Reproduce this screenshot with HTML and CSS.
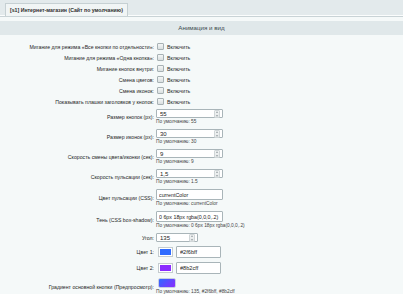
FILE: index.html
```html
<!DOCTYPE html>
<html lang="ru">
<head>
  <meta charset="UTF-8">
  <title>Настройки модуля</title>
  <link rel="stylesheet" href="styles.css">
</head>
<body>
  <div class="tabs">
    <div class="tab">[s1] Интернет-магазин (Сайт по умолчанию)</div>
  </div>
  <div class="content">
    <div class="heading">Анимация и вид</div>
    <div class="form">
      <div class="row check">
        <div class="label">Мигание для режима «Все кнопки по отдельности»:</div>
        <label class="ctrl"><input type="checkbox"> Включить</label>
      </div>
      <div class="row check">
        <div class="label">Мигание для режима «Одна кнопка»:</div>
        <label class="ctrl"><input type="checkbox"> Включить</label>
      </div>
      <div class="row check">
        <div class="label">Мигание кнопок внутри:</div>
        <label class="ctrl"><input type="checkbox"> Включить</label>
      </div>
      <div class="row check">
        <div class="label">Смена цветов:</div>
        <label class="ctrl"><input type="checkbox"> Включить</label>
      </div>
      <div class="row check">
        <div class="label">Смена иконок:</div>
        <label class="ctrl"><input type="checkbox"> Включить</label>
      </div>
      <div class="row check">
        <div class="label">Показывать плашки заголовков у кнопок:</div>
        <label class="ctrl"><input type="checkbox"> Включить</label>
      </div>

      <div class="row">
        <div class="label">Размер кнопок (px):</div>
        <div class="ctrl">
          <div class="num"><input type="text" value="55"><span class="spin"></span></div>
          <div class="hint">По умолчанию: 55</div>
        </div>
      </div>
      <div class="row">
        <div class="label">Размер иконок (px):</div>
        <div class="ctrl">
          <div class="num"><input type="text" value="30"><span class="spin"></span></div>
          <div class="hint">По умолчанию: 30</div>
        </div>
      </div>
      <div class="row">
        <div class="label">Скорость смены цвета/иконки (сек):</div>
        <div class="ctrl">
          <div class="num"><input type="text" value="9"><span class="spin"></span></div>
          <div class="hint">По умолчанию: 9</div>
        </div>
      </div>
      <div class="row">
        <div class="label">Скорость пульсации (сек):</div>
        <div class="ctrl">
          <div class="num"><input type="text" value="1,5"><span class="spin"></span></div>
          <div class="hint">По умолчанию: 1.5</div>
        </div>
      </div>
      <div class="row">
        <div class="label">Цвет пульсации (CSS):</div>
        <div class="ctrl">
          <input class="text" type="text" value="currentColor">
          <div class="hint">По умолчанию: currentColor</div>
        </div>
      </div>
      <div class="row">
        <div class="label">Тень (CSS box-shadow):</div>
        <div class="ctrl">
          <input class="text" type="text" value="0 6px 18px rgba(0,0,0,.2)">
          <div class="hint">По умолчанию: 0 6px 18px rgba(0,0,0,.2)</div>
        </div>
      </div>
      <div class="row">
        <div class="label">Угол:</div>
        <div class="ctrl">
          <div class="num short"><input type="text" value="135"><span class="spin"></span></div>
        </div>
      </div>
      <div class="row">
        <div class="label">Цвет 1:</div>
        <div class="ctrl color">
          <span class="swatch" style="background:#2f6bff"></span>
          <input class="hex" type="text" value="#2f6bff">
        </div>
      </div>
      <div class="row">
        <div class="label">Цвет 2:</div>
        <div class="ctrl color">
          <span class="swatch" style="background:#8b2cff"></span>
          <input class="hex" type="text" value="#8b2cff">
        </div>
      </div>
      <div class="row">
        <div class="label">Градиент основной кнопки (Предпросмотр):</div>
        <div class="ctrl">
          <div class="preview"></div>
          <div class="hint">По умолчанию: 135, #2f6bff, #8b2cff</div>
        </div>
      </div>
    </div>
  </div>
</body>
</html>
```

FILE: styles.css
```css
html,
body {
  margin: 0;
  padding: 0;
}

body {
  width: 403px;
  height: 294px;
  overflow: hidden;
  background-color: #f5f9f9;
  font-family: "Liberation Sans", Arial, sans-serif;
  font-size: 5.2px;
  color: #1f1f1f;
}

.tabs {
  height: 16px;
  padding: 3px 0 0 5px;
  box-sizing: border-box;
  background-color: #e3eaec;
  border-bottom: 1px solid #fbfdfd;
  box-shadow: 0 1px 0 #c9d3d6;
}

.tab {
  display: inline-block;
  height: 13px;
  line-height: 12px;
  padding: 0 4px;
  box-sizing: border-box;
  background-color: #f1f5f5;
  border: 1px solid #c6d0d3;
  border-bottom: none;
  font-weight: bold;
  font-size: 5.2px;
  color: #2d2d2d;
}

.content {
  padding-top: 5px;
}

.heading {
  height: 14px;
  line-height: 14px;
  text-align: center;
  background-color: #e0e8ea;
  color: #3d4b4f;
  font-size: 6.2px;
  margin-bottom: 6px;
}

.row {
  display: grid;
  grid-template-columns: 154px 1fr;
  column-gap: 2px;
  align-items: center;
  padding: 2px 0;
}

.label {
  text-align: right;
}

.ctrl {
  display: flex;
  flex-direction: column;
  align-items: flex-start;
}

label.ctrl {
  flex-direction: row;
  align-items: center;
  gap: 3px;
  padding-left: 1px;
}

input[type="checkbox"] {
  appearance: none;
  margin: 0;
  width: 7px;
  height: 7px;
  border: 1px solid #a7b1b4;
  border-radius: 1px;
  background: linear-gradient(#f4f6f6, #d9dfe0);
  box-sizing: border-box;
}

.num,
.text,
.hex {
  height: 9px;
  border: 1px solid #a9b5b9;
  border-radius: 1px;
  background-color: #fff;
  box-sizing: border-box;
}

.num {
  display: flex;
  align-items: center;
  width: 67px;
}

.num.short {
  width: 42px;
}

.num input,
.text,
.hex {
  font-family: inherit;
  font-size: 6px;
  color: #222;
  padding: 0 0 0 3px;
  outline: none;
}

.num input {
  flex: 1;
  min-width: 0;
  border: none;
  height: 7px;
  margin: 0;
  background: transparent;
}

.spin {
  width: 4px;
  height: 6px;
  margin-right: 2px;
  border: 1px solid #d0d6d8;
  border-radius: 1px;
  background: linear-gradient(#f2f4f4, #e3e7e8);
  position: relative;
}

.spin::before,
.spin::after {
  content: "";
  position: absolute;
  left: 1px;
  border-left: 1px solid transparent;
  border-right: 1px solid transparent;
}

.spin::before {
  top: 0;
  border-bottom: 2px solid #9aa3a6;
}

.spin::after {
  bottom: 0;
  border-top: 2px solid #9aa3a6;
}

.text {
  width: 67px;
  height: 11px;
  margin: 0;
  font-size: 5.3px;
  padding-left: 2px;
}

.hint {
  font-size: 4.8px;
  line-height: 6px;
  color: #444;
  margin-top: 1px;
  white-space: nowrap;
}

.color {
  flex-direction: row;
  align-items: center;
  gap: 3px;
  padding-left: 2px;
}

.swatch {
  width: 15px;
  height: 10px;
  border: 1px solid #c5cccf;
  box-shadow: inset 0 0 0 1px #fff;
  box-sizing: border-box;
}

.hex {
  width: 45px;
  height: 12px;
  margin: 0;
  font-size: 5.6px;
}

.preview {
  width: 18px;
  height: 10px;
  margin-left: 2px;
  border-radius: 2px;
  border: 1px solid #c9cfe0;
  box-sizing: border-box;
  background: linear-gradient(135deg, #2f6bff, #8b2cff);
}
```
